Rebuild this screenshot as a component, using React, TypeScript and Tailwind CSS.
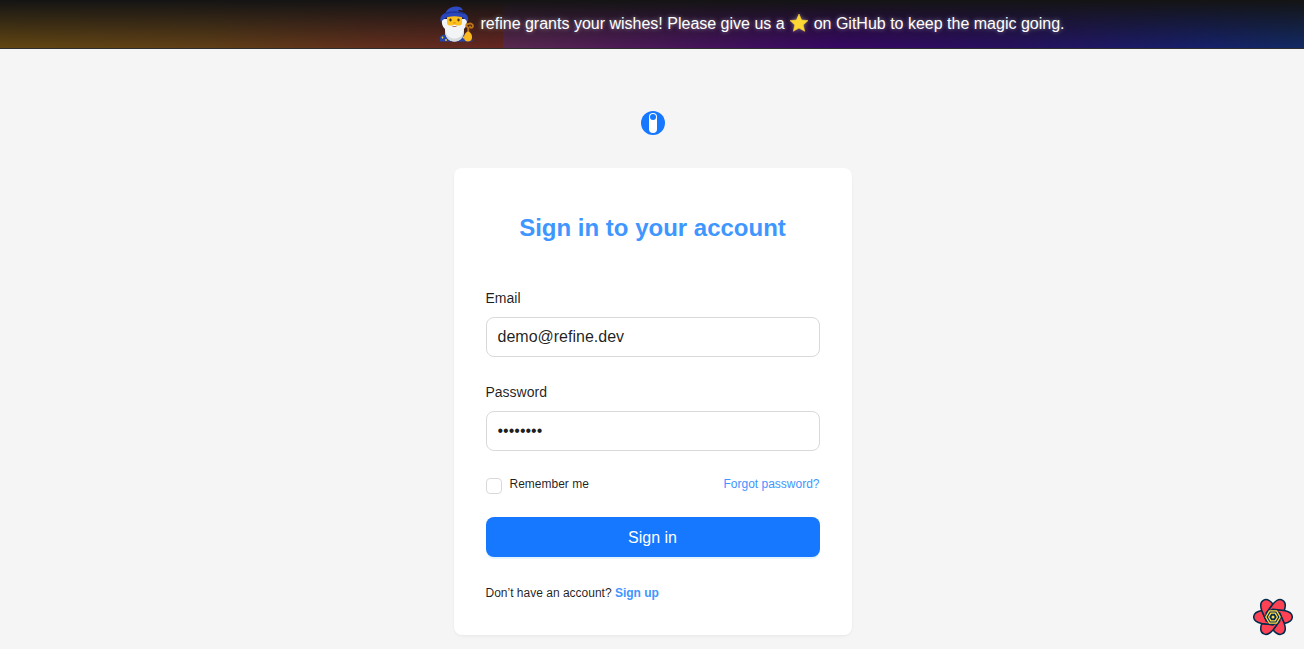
import { useState } from "react";

function Wizard() {
  return (
    <svg viewBox="0 0 36 36" className="size-9 shrink-0" aria-hidden="true">
      <path d="M.8 35.500v-3c0-2.500 2-4 6-4h19c5 0 7.700 1.500 7.700 7z" fill="#2643a8" />
      <circle cx="3.500" cy="31.500" r=".9" fill="#f6d33c" />
      <circle cx="7" cy="34" r=".9" fill="#f6d33c" />
      <circle cx="24.500" cy="31.500" r=".9" fill="#f6d33c" />
      <path d="M3.200 13h24.300c1 4 0 7.500-2.500 10 .3 7-3 12.500-9.500 12.500S5.700 30 6 23c-2.800-2.500-3.800-6-2.800-10z" fill="#f3f4f5" />
      <path d="M6 24.500c2 6 5 8 9.500 8s7.500-2 9.500-8c.5 6-3.500 11-9.500 11S5.500 30.500 6 24.500z" fill="#d9dcde" />
      <path d="M8 9.500h15v7c0 2-1 3-2.500 3-1.700 0-3-.8-5-.8s-3.300.8-5 .8C9 19.500 8 18.500 8 16.500z" fill="#fcc21b" />
      <ellipse cx="11.500" cy="14" rx="1.200" ry="1.400" fill="#4a3428" />
      <ellipse cx="19.500" cy="14" rx="1.200" ry="1.400" fill="#4a3428" />
      <ellipse cx="15.500" cy="16.800" rx="1.500" ry=".9" fill="#e59a18" />
      <path d="M12.500 19.500c2 .7 4 .7 6 0-.8 1.700-5.200 1.700-6 0z" fill="#9c4a3c" />
      <path d="M6 9C6.500 4.500 11 .5 17 .5c4 0 6.300 1.500 6.800 4-2.500-.7-4.800-.7-4.600.3C19.500 6 23 7 25 10z" fill="#2d4cc4" />
      <path d="M5 7.500c5-3 16-3 21 0 2.500 1.500 4 4.500 2.700 8.500-1.700-2.500-4-4-6.700-5-4-1-9-1-13 0-2.700 1-5 2.500-7 5C.3 12 2.500 9 5 7.500z" fill="#2946bc" />
      <path d="M5.500 7.200c5-2.700 15-2.700 20 0v1.300c-5-2.500-15-2.500-20 0z" fill="#1d3595" />
      <path d="M29.300 27v-5c-.5-1-2-1.300-2-2.600s1.200-1.400 2-1.400c2.500-1.300 5.200.3 4.600 2.600-.4 1.700-3.400 1.500-2.900-.1" fill="none" stroke="#bd7417" strokeWidth="1.900" strokeLinecap="round" />
      <path d="M27.200 26.500c.7-1.500 3-1.500 3.800 0 2.800 2 2.800 8-.5 8.800-3.500.7-5.700-1-5.500-4.300.3-2 1-3.500 2.200-4.500z" fill="#fbb91d" />
    </svg>
  );
}

function Star() {
  return (
    <svg viewBox="0 0 20 20" className="mr-[5px] ml-1 inline size-5 align-[-4px] drop-shadow-[0_0_2px_#ffffff66]" role="img" aria-label="star">
      <path d="M10 1l2.600 6 6.400.6-4.800 4.300 1.500 6.400L10 15l-5.700 3.300 1.500-6.400L1 7.600 7.400 7z" fill="#fdd835" stroke="#fdd030" strokeWidth=".6" strokeLinejoin="round" />
    </svg>
  );
}

function RefineLogo() {
  return (
    <svg viewBox="0 0 24 24" className="size-6" role="img" aria-label="refine">
      <circle cx="12" cy="12" r="12" fill="#1677ff" />
      <rect x="8" y="2" width="8" height="20" rx="4" fill="#fff" />
      <circle cx="12" cy="6" r="3" fill="#1677ff" />
    </svg>
  );
}

const PETAL_ANGLES = [0, 60, 120, 180, 240, 300];

function QueryFlower() {
  return (
    <svg viewBox="-20 -20 40 40" className="size-10" aria-hidden="true">
      <g fill="#ff4154" stroke="#002c4b" strokeWidth="1.500" strokeLinejoin="round">
        {PETAL_ANGLES.map((angle) => (
          <path
            key={angle}
            transform={`rotate(${angle})`}
            d="M11.300-6.500C16-5.600 19.300-3.200 19.300 0S16 5.600 11.300 6.500L6.700-3.900 0-7.700z"
          />
        ))}
      </g>
      <path d="M-8.500 0l4.250-7.300h8.500L8.500 0 4.250 7.300h-8.500z" fill="#002c4b" />
      <g fill="none" stroke="#ffd94c" strokeWidth="1.300" strokeLinejoin="round">
        <path d="M-7.200 0l3.600-6.200h7.200L7.200 0 3.600 6.200h-7.200z" />
        <path d="M-4.400 0l2.200-3.800h4.400L4.400 0 2.200 3.800h-4.400z" />
      </g>
      <circle r="1.500" fill="#ffd94c" />
    </svg>
  );
}

const INPUT =
  "h-10 w-full rounded-lg border border-[#d9d9d9] bg-white px-[11px] text-base text-black/88 outline-none focus:border-[#4096ff]";

export default function App() {
  const [email, setEmail] = useState("demo@refine.dev");
  const [password, setPassword] = useState("demodemo");

  return (
    <div className="flex min-h-screen flex-col bg-[#f5f5f5] font-['Liberation_Sans',Arial,sans-serif] text-black/88">
      <header className="border-b border-[#303030] bg-[linear-gradient(to_bottom,#141414_0%,#14141400_100%),linear-gradient(to_right,#624612_0%,#603f17_16%,#62301d_28%,#662621_38.6%,#5a2850_38.6%,#4a1858_50%,#370764_64%,#27105f_77%,#16206a_92%,#122a63_100%)]">
        <div className="flex h-12 items-center justify-center gap-[6px] pl-[199px] text-base text-white [text-shadow:0_0_4px_#ffffff80]">
          <Wizard />
          <p className="whitespace-nowrap">
            refine grants your wishes! Please give us a
            <Star />
            on GitHub to keep the magic going.
          </p>
        </div>
      </header>

      <main className="flex flex-1 flex-col items-center pt-[62px] pb-[14px] pl-px">
        <RefineLogo />
        <section className="mt-[33px] w-full max-w-[398px] rounded-lg bg-white px-8 pt-11 pb-[33px] shadow-[0_1px_2px_0_rgba(0,0,0,0.03),0_1px_6px_-1px_rgba(0,0,0,0.02),0_2px_4px_0_rgba(0,0,0,0.02)]">
          <h1 className="text-center text-2xl font-bold text-[#4096ff]">Sign in to your account</h1>
          <form className="mt-[43px]" onSubmit={(event) => event.preventDefault()}>
            <label htmlFor="email" className="mb-2 block text-sm leading-[22px]">
              Email
            </label>
            <input id="email" type="email" className={INPUT} value={email} onChange={(event) => setEmail(event.target.value)} />
            <label htmlFor="password" className="mt-6 mb-2 block text-sm leading-[22px]">
              Password
            </label>
            <input id="password" type="password" className={INPUT} value={password} onChange={(event) => setPassword(event.target.value)} />
            <div className="mt-6 flex items-start justify-between text-xs leading-[18px]">
              <label className="flex items-start gap-2">
                <input type="checkbox" className="mt-[3px] size-4 appearance-none rounded border border-[#d9d9d9] bg-white checked:border-[#1677ff] checked:bg-[#1677ff]" />
                Remember me
              </label>
              <a href="#forgot-password" className="text-[#4096ff]">
                Forgot password?
              </a>
            </div>
            <button type="submit" className="mt-[23px] h-10 w-full rounded-lg bg-[#1677ff] pt-0.5 text-base text-white shadow-[0_2px_0_rgba(5,145,255,0.1)]">
              Sign in
            </button>
          </form>
          <p className="mt-[27px] text-xs leading-[18px]">
            Don’t have an account?{" "}
            <a href="#sign-up" className="font-bold text-[#4096ff]">
              Sign up
            </a>
          </p>
        </section>
      </main>

      <button type="button" aria-label="Open query devtools" className="fixed right-[11px] bottom-3">
        <QueryFlower />
      </button>
    </div>
  );
}
